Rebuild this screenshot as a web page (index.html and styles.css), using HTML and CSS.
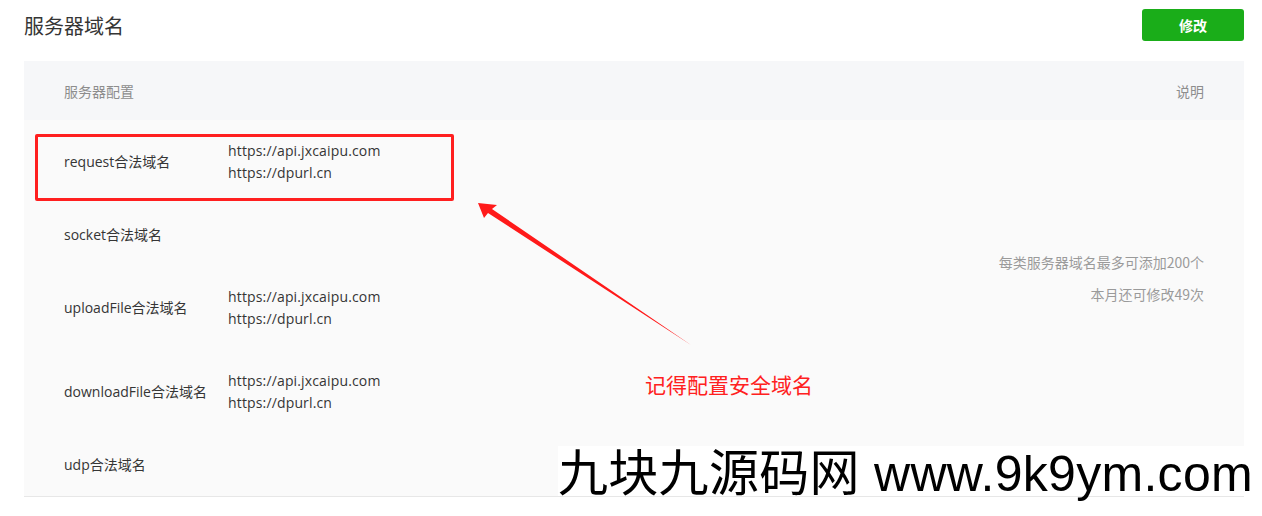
FILE: index.html
```html
<!DOCTYPE html>
<html lang="zh-CN">
<head>
  <meta charset="UTF-8" />
  <title>服务器域名</title>
  <link rel="stylesheet" href="styles.css">
</head>
<body>
  <div class="page">
    <div class="title-bar">
      <h2>服务器域名</h2>
      <button type="button">修改</button>
    </div>
    <div class="domain-table">
      <div class="table-head">
        <span>服务器配置</span>
        <span>说明</span>
      </div>
      <div class="table-body">
        <div class="rows">
          <div class="row">
            <div class="label">request合法域名</div>
            <div class="urls">https://api.jxcaipu.com<br>https://dpurl.cn</div>
          </div>
          <div class="row">
            <div class="label">socket合法域名</div>
            <div class="urls"></div>
          </div>
          <div class="row">
            <div class="label">uploadFile合法域名</div>
            <div class="urls">https://api.jxcaipu.com<br>https://dpurl.cn</div>
          </div>
          <div class="row">
            <div class="label">downloadFile合法域名</div>
            <div class="urls">https://api.jxcaipu.com<br>https://dpurl.cn</div>
          </div>
          <div class="row">
            <div class="label">udp合法域名</div>
            <div class="urls"></div>
          </div>
        </div>
        <div class="note">
          <p>每类服务器域名最多可添加200个</p>
          <p>本月还可修改49次</p>
        </div>
      </div>
    </div>
  </div>

  <!-- annotations drawn over the screenshot -->
  <div class="mark-box"></div>
  <svg class="mark-arrow" width="1262" height="516" viewBox="0 0 1262 516">
    <polygon points="478,203 497,205 492,209 691,345 488,213 484,218" fill="#ff1a1a" />
  </svg>
  <div class="mark-text">记得配置安全域名</div>
  <div class="watermark">九块九源码网 www.9k9ym.com</div>
</body>
</html>
```

FILE: styles.css
```css
body {
  margin: 0;
  position: relative;
  width: 1262px;
  height: 516px;
  overflow: hidden;
  background: #fff;
  font-family: "Open Sans", "Noto Sans CJK SC", sans-serif;
  color: #353535;
}
.page {
  padding: 9px 18px 0 24px;
}
.title-bar {
  display: flex;
  justify-content: space-between;
  align-items: center;
  height: 32px;
  margin-bottom: 20px;
}
.title-bar h2 {
  margin: 0;
  font-family: "Noto Sans CJK SC", sans-serif;
  font-size: 20px;
  font-weight: normal;
  color: #353535;
}
.title-bar button {
  width: 102px;
  height: 32px;
  border: none;
  border-radius: 3px;
  background-color: #1aad19;
  color: #fff;
  font-family: "Noto Sans CJK SC", sans-serif;
  font-size: 14px;
  font-weight: bold;
}
.domain-table {
  border-bottom: 1px solid #e7e7e7;
}
.table-head {
  display: flex;
  justify-content: space-between;
  align-items: center;
  height: 59px;
  padding: 0 40px;
  background: #f6f7f9;
  font-family: "Noto Sans CJK SC", sans-serif;
  font-size: 14px;
  color: #8d8d8d;
}
.table-body {
  display: flex;
  justify-content: space-between;
  background: #fafafa;
  font-size: 14px;
}
.row {
  display: flex;
  align-items: center;
  padding: 20px 40px;
  min-height: 22px;
  line-height: 22px;
}
.label {
  width: 164px;
}
.urls {
  letter-spacing: 0.15px;
}
.note {
  padding: 131px 40px 0 0;
  text-align: right;
  font-family: "Noto Sans CJK SC", sans-serif;
  font-size: 14px;
  color: #9a9a9a;
}
.note p {
  margin: 0 0 10px;
  line-height: 22px;
}
.mark-box {
  position: absolute;
  left: 35px;
  top: 134px;
  width: 413px;
  height: 61px;
  border: 3px solid #ff1f1f;
  border-radius: 2px;
}
.mark-arrow {
  position: absolute;
  left: 0;
  top: 0;
}
.mark-text {
  position: absolute;
  left: 645px;
  top: 370px;
  font-family: "Noto Sans CJK SC", sans-serif;
  font-size: 21px;
  line-height: 28px;
  color: #ff2020;
}
.watermark {
  position: absolute;
  left: 558px;
  top: 446px;
  width: 704px;
  height: 50px;
  background: #fff;
  font-family: "Liberation Sans", "Noto Sans CJK SC", sans-serif;
  font-size: 50px;
  line-height: 56px;
  letter-spacing: 0.3px;
  color: #000;
  white-space: nowrap;
}
```
